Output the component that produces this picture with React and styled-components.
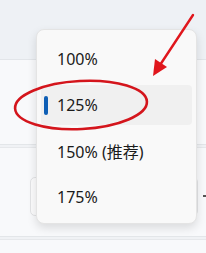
import React from 'react'
import styled, { createGlobalStyle } from 'styled-components'

const GlobalStyle = createGlobalStyle`
  html, body {
    margin: 0;
    padding: 0;
    background: #f0f2f5;
  }
  body {
    font-family: "Noto Sans", "Noto Sans CJK SC", sans-serif;
  }
`

const options = [
    { label: '100%', selected: false },
    { label: '125%', selected: true },
    { label: '150% (推荐)', selected: false },
    { label: '175%', selected: false },
]

const App = () => {
    return (
        <Page>
            <GlobalStyle />
            {/* settings page behind the flyout */}
            <Header />
            <Cards>
                <Card $height={84} />
                <Card $height={88}>
                    <Field />
                    <SideMark />
                </Card>
                <Card $height={20} />
            </Cards>

            {/* scale flyout */}
            <Menu>
                {options.map((opt) => (
                    <MenuItem key={opt.label} $selected={opt.selected}>
                        {opt.selected && <Indicator />}
                        {opt.label}
                    </MenuItem>
                ))}
            </Menu>

            {/* red annotation */}
            <Annotation width="206" height="253" viewBox="0 0 206 253">
                <ellipse cx="81" cy="105" rx="66" ry="24" fill="none" stroke="#d4151c" strokeWidth="2.6" transform="rotate(-3 81 105)" />
                <line x1="193" y1="15" x2="160" y2="65" stroke="#e0161c" strokeWidth="2.4" strokeLinecap="round" />
                <polygon points="153,76 155,59 167,67" fill="#e0161c" />
            </Annotation>
        </Page>
    )
}

export default App

const Page = styled.div`
position: relative;
width: 206px;
height: 253px;
overflow: hidden;
background: #f0f2f5;
`;
const Header = styled.div`
height: 59px;
background: #eef1f5;
border-bottom: 1px solid #e2e5e9;
`;
const Cards = styled.div`
display: flex;
flex-direction: column;
gap: 2px;
`;
const Card = styled.div`
position: relative;
height: ${(p) => p.$height}px;
background: #f8f9fb;
border-top: 1px solid #e6e8eb;
border-bottom: 1px solid #e3e6e9;
display: flex;
align-items: center;
padding-left: 30px;
&:first-child {
    border-top: none;
}
`;
const Field = styled.div`
width: 168px;
height: 37px;
margin-top: 8px;
border: 1px solid #e2e3e5;
border-radius: 5px;
background: #fbfbfc;
`;
const SideMark = styled.div`
width: 3px;
height: 2px;
margin-left: 5px;
margin-top: 8px;
background: #555;
`;
const Menu = styled.div`
position: absolute;
left: 36px;
top: 29px;
width: 161px;
box-sizing: border-box;
display: flex;
flex-direction: column;
gap: 6px;
padding: 9px 4px 6px;
background: #f9f9f9;
border: 1px solid #e4e4e4;
border-radius: 8px;
box-shadow: 0 4px 10px rgba(0, 0, 0, 0.12);
`;
const MenuItem = styled.div`
position: relative;
display: flex;
align-items: center;
height: 40px;
padding-left: 16px;
border-radius: 4px;
background: ${(p) => (p.$selected ? '#f0f0f0' : 'transparent')};
color: #1b1b1b;
font-size: 16px;
font-family: "Noto Sans", "Noto Sans CJK SC", sans-serif;
`;
const Indicator = styled.span`
position: absolute;
left: 3px;
top: 11px;
width: 3.5px;
height: 19px;
border-radius: 2px;
background: #0f5fb5;
`;
const Annotation = styled.svg`
position: absolute;
left: 0;
top: 0;
pointer-events: none;
`;
